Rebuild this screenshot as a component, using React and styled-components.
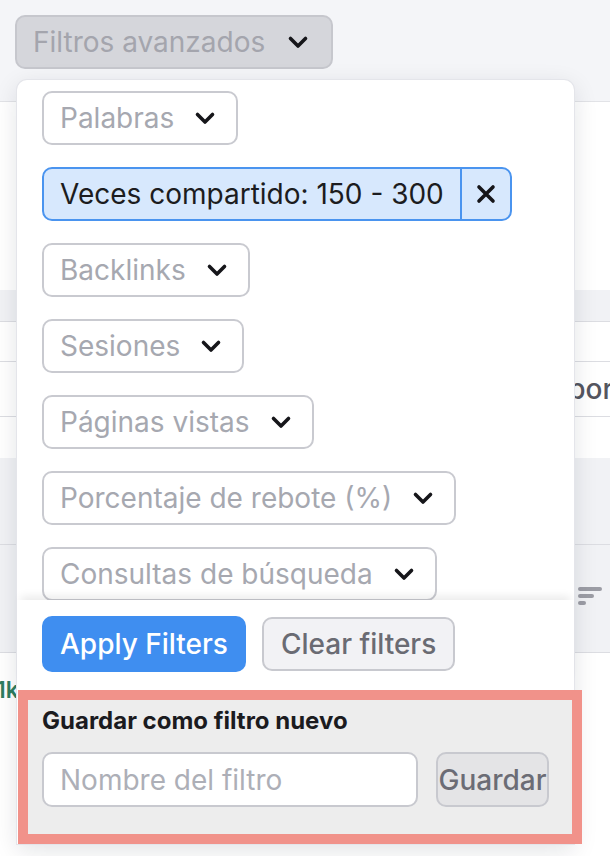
import styled, { createGlobalStyle } from "styled-components"

const GlobalStyle = createGlobalStyle`
  html, body {
    margin: 0;
    padding: 0;
    background: #ffffff;
    font-family: Inter, "Noto Sans", "Liberation Sans", sans-serif;
  }
  * { box-sizing: border-box; }
`

const Page = styled.div`
  position: relative;
  width: 610px;
  height: 856px;
  overflow: hidden;
  background: #ffffff;
`

const Header = styled.div`
  height: 102px;
  padding: 15px;
  background: #f4f5f8;
  border-bottom: 1px solid #e2e3e7;
`

const Trigger = styled.button`
  display: inline-flex;
  align-items: center;
  gap: 22px;
  height: 54px;
  padding: 0 22px 0 16px;
  border: 2px solid #c6c7cd;
  border-radius: 10px;
  background: #d5d6db;
  color: #a4a5ad;
  font-family: inherit;
  font-size: 28px;
  font-weight: 400;
`

const Band = styled.div`
  height: ${p => p.$h}px;
  background: ${p => (p.$gray ? "#f1f2f5" : "#ffffff")};
  border-bottom: ${p => (p.$line ? "1px solid #dcdde2" : "none")};
  display: flex;
  align-items: center;
`

const HeadCell = styled.span`
  padding-left: 534px;
  font-size: 28px;
  font-weight: 500;
  color: #55565f;
  white-space: nowrap;
`

const SortCell = styled.div`
  padding-left: 578px;
  display: flex;
  flex-direction: column;
  gap: 3px;
  margin-top: -6px;
`

const SortBar = styled.span`
  display: block;
  width: ${p => p.$w}px;
  height: 4px;
  border-radius: 2px;
  background: #9c9da5;
`

const ValueCell = styled.span`
  margin-left: -4px;
  margin-top: -26px;
  font-size: 23px;
  font-weight: 600;
  color: #2f7d5f;
`

const Panel = styled.div`
  position: absolute;
  top: 80px;
  left: 17px;
  width: 557px;
  background: #ffffff;
  border-radius: 10px 10px 0 0;
  box-shadow: 0 0 0 1px #e4e5ea, 0 6px 24px rgba(20, 22, 40, 0.12);
`

const FilterList = styled.div`
  height: 520px;
  overflow: hidden;
  padding: 11px 24px 0 25px;
  display: flex;
  flex-direction: column;
  align-items: flex-start;
  gap: 22px;
`

const Chip = styled.div`
  flex: none;
  display: inline-flex;
  align-items: center;
  height: 54px;
  border: 2px solid ${p => (p.$active ? "#4a94ef" : "#c9cad0")};
  border-radius: 10px;
  background: ${p => (p.$active ? "#d7e8fd" : "#ffffff")};
  color: ${p => (p.$active ? "#1c1c20" : "#a6a8b0")};
  font-size: 28px;
  font-weight: 400;
  white-space: nowrap;
`

const ChipLabel = styled.span`
  display: inline-flex;
  align-items: center;
  gap: 20px;
  height: 100%;
  padding: 0 ${p => (p.$active ? 16 : 20)}px 0 16px;
`

const ChipClose = styled.span`
  display: inline-flex;
  align-items: center;
  justify-content: center;
  height: 100%;
  width: 50px;
  border-left: 2px solid #4a94ef;
`

const Footer = styled.div`
  position: relative;
  display: flex;
  gap: 16px;
  align-items: center;
  padding: 16px 25px;
  background: #ffffff;
  box-shadow: 0 -8px 8px -4px rgba(0, 0, 0, 0.08);
`

const ActionButton = styled.button`
  height: ${p => (p.$primary ? 56 : 54)}px;
  padding: 0 ${p => (p.$primary ? 18 : 17)}px;
  border: ${p => (p.$primary ? "none" : "2px solid #c8c9cf")};
  border-radius: 10px;
  background: ${p => (p.$primary ? "#3f8ef0" : "#f2f2f5")};
  color: ${p => (p.$primary ? "#ffffff" : "#6a6b73")};
  font-family: inherit;
  font-size: 28px;
  font-weight: 500;
`

const SaveSection = styled.div`
  margin: 2px -8px 0 1px;
  border: 10px solid #f1928a;
  background: #ededed;
  padding: 5px 14px 27px;
`

const SaveTitle = styled.div`
  font-size: 24px;
  line-height: 32px;
  font-weight: 700;
  color: #1b1b1f;
`

const SaveRow = styled.div`
  display: flex;
  gap: 18px;
  margin-top: 15px;
`

const NameInput = styled.input`
  width: 376px;
  height: 55px;
  padding: 0 16px;
  border: 2px solid #c8c9cf;
  border-radius: 10px;
  background: #ffffff;
  font-family: inherit;
  font-size: 28px;
  color: #1b1b1f;
  outline: none;
  &::placeholder { color: #adafb7; }
`

const SaveButton = styled.button`
  width: 113px;
  height: 55px;
  padding: 0;
  border: 2px solid #c8c9cf;
  border-radius: 10px;
  background: #e4e4e6;
  color: #6b6c75;
  font-family: inherit;
  font-size: 28px;
  font-weight: 500;
`

function Chevron() {
  return (
    <svg width="22" height="14" viewBox="0 0 22 14" fill="none">
      <polyline points="3.5,3.5 11,11 18.5,3.5" stroke="#16161a" strokeWidth="3.6" strokeLinecap="round" strokeLinejoin="round" />
    </svg>
  )
}

function Cross() {
  return (
    <svg width="20" height="20" viewBox="0 0 20 20" fill="none">
      <path d="M3 3 L17 17 M17 3 L3 17" stroke="#16161a" strokeWidth="3.6" strokeLinecap="round" />
    </svg>
  )
}

const filters = [
  { label: "Palabras" },
  { label: "Veces compartido: 150 - 300", active: true },
  { label: "Backlinks" },
  { label: "Sesiones" },
  { label: "Páginas vistas" },
  { label: "Porcentaje de rebote (%)" },
  { label: "Consultas de búsqueda" },
]

export default function App() {
  return (
    <Page>
      <GlobalStyle />
      <Header>
        <Trigger>Filtros avanzados <Chevron /></Trigger>
      </Header>
      <Band $h={188} />
      <Band $h={32} $gray $line />
      <Band $h={40} $line />
      <Band $h={55} $line><HeadCell>Reporte</HeadCell></Band>
      <Band $h={41} />
      <Band $h={87} $gray $line />
      <Band $h={108} $gray $line>
        <SortCell>
          <SortBar $w={24} />
          <SortBar $w={16} />
          <SortBar $w={8} />
        </SortCell>
      </Band>
      <Band $h={100}><ValueCell>1k</ValueCell></Band>

      <Panel>
        <FilterList>
          {filters.map(f => (
            <Chip key={f.label} $active={f.active}>
              <ChipLabel $active={f.active}>
                {f.label}
                {!f.active && <Chevron />}
              </ChipLabel>
              {f.active && <ChipClose><Cross /></ChipClose>}
            </Chip>
          ))}
        </FilterList>
        <Footer>
          <ActionButton $primary>Apply Filters</ActionButton>
          <ActionButton>Clear filters</ActionButton>
        </Footer>
        <SaveSection>
          <SaveTitle>Guardar como filtro nuevo</SaveTitle>
          <SaveRow>
            <NameInput placeholder="Nombre del filtro" />
            <SaveButton>Guardar</SaveButton>
          </SaveRow>
        </SaveSection>
      </Panel>
    </Page>
  )
}
